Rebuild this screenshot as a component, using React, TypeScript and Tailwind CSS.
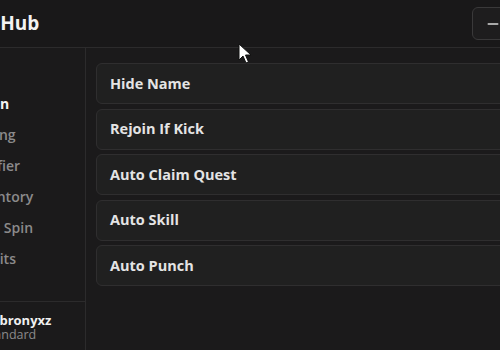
import { Minus } from 'lucide-react'

const tabs = ['Main', 'Fishing', 'Notifier', 'Inventory', 'Auto Spin', 'Credits']
const toggles = ['Hide Name', 'Rejoin If Kick', 'Auto Claim Quest', 'Auto Skill', 'Auto Punch']

export default function App() {
  return (
    <div
      className="relative w-[500px] h-[350px] overflow-hidden bg-[#1b1a1b] text-white"
      style={{ fontFamily: '"Open Sans", "Liberation Sans", sans-serif' }}
    >
      <div className="-ml-[60px] w-[600px] h-full flex flex-col">
        {/* title bar */}
        <div className="h-[48px] shrink-0 flex items-center justify-between pl-[8px] bg-[#191819] border-b border-[#2c2b2c]">
          <span className="text-[19px] font-bold text-[#f2f2f2]">Tiger Hub</span>
          <div className="w-[68px] h-[33px] rounded-[6px] border border-[#3a393a] bg-[#1e1d1e] flex items-center pl-[12px]">
            <Minus size={16} strokeWidth={2.5} className="text-[#d8d8d8]" />
          </div>
        </div>

        <div className="flex flex-1 min-h-0">
          {/* sidebar */}
          <div className="w-[146px] shrink-0 border-r border-[#2c2b2c] flex flex-col">
            <div className="flex-1 flex flex-col pt-[44px] pl-[28px] gap-[8px]">
              {tabs.map((t, i) => (
                <div
                  key={t}
                  className={`h-[23px] flex items-center text-[14px] ${
                    i === 0 ? 'pl-[6px] font-bold text-[#f4f4f4]' : 'font-semibold text-[#8b8a8b]'
                  }`}
                >
                  {t}
                </div>
              ))}
            </div>
            <div className="h-[49px] shrink-0 border-t border-[#2c2b2c] flex flex-col justify-center pl-[43px] pt-[3px]">
              <span className="text-[13px] font-bold leading-[15px] text-[#f0f0f0]">Itsbronyxz</span>
              <span className="text-[12.5px] leading-[14px] text-[#8b8a8b]">Standard</span>
            </div>
          </div>

          {/* toggles */}
          <div className="flex-1 pl-[10px] pt-[15px] flex flex-col gap-[4.5px]">
            {toggles.map((t) => (
              <div
                key={t}
                className="h-[41px] w-[460px] rounded-[6px] border border-[#2f2e2f] bg-[#202020] flex items-center pl-[13px] text-[14.5px] font-bold text-[#e4e4e4]"
              >
                {t}
              </div>
            ))}
          </div>
        </div>
      </div>

      {/* mouse cursor */}
      <svg className="absolute left-[238px] top-[43px]" width="14" height="22" viewBox="0 0 14 22">
        <path d="M1 1 L1 17 L5 13 L8 20 L10.5 19 L7.5 12 L13 12 Z" fill="#ffffff" stroke="#111" strokeWidth="1" />
      </svg>
    </div>
  )
}
